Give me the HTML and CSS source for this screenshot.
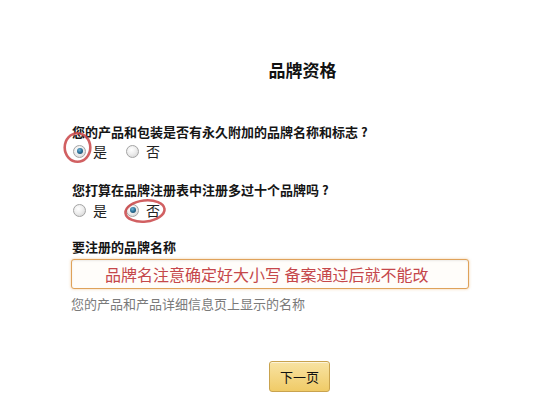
FILE: index.html
```html
<!DOCTYPE html>
<html lang="zh-CN">
<head>
<meta charset="utf-8">
<title>品牌资格</title>
<link rel="stylesheet" href="styles.css">
</head>
<body>
<main class="page">
  <h1 class="title">品牌资格</h1>

  <section class="question q1">
    <p class="q-text">您的产品和包装是否有永久附加的品牌名称和标志 ?</p>
    <div class="options">
      <label class="option"><span class="radio checked"></span><span class="opt-label">是</span>
        <svg class="ring ring1" viewBox="0 0 29 31" width="29" height="31"><ellipse cx="14.5" cy="15.5" rx="12.8" ry="14.2" fill="none" stroke="#c94446" stroke-width="2.6" opacity="0.85"/></svg>
      </label>
      <label class="option"><span class="radio"></span><span class="opt-label">否</span></label>
    </div>
  </section>

  <section class="question q2">
    <p class="q-text">您打算在品牌注册表中注册多过十个品牌吗 ?</p>
    <div class="options">
      <label class="option"><span class="radio"></span><span class="opt-label">是</span></label>
      <label class="option"><span class="radio checked"></span><span class="opt-label">否</span>
        <svg class="ring ring2" viewBox="0 0 44 26" width="44" height="26"><ellipse cx="22" cy="13" rx="19.6" ry="10.6" transform="rotate(-6 22 13)" fill="none" stroke="#c94446" stroke-width="2.6" opacity="0.85"/></svg>
      </label>
    </div>
  </section>

  <section class="field">
    <p class="field-label">要注册的品牌名称</p>
    <input class="brand-input" type="text" readonly value="品牌名注意确定好大小写 备案通过后就不能改">
    <p class="hint">您的产品和产品详细信息页上显示的名称</p>
  </section>

  <div class="actions">
    <button class="next-btn" type="button">下一页</button>
  </div>
</main>
</body>
</html>
```

FILE: styles.css
```css
html, body {
  margin: 0;
  padding: 0;
  background: #ffffff;
}

body {
  font-family: "Noto Sans CJK SC", "Noto Sans", "Liberation Sans", sans-serif;
  color: #1a1a1a;
  width: 533px;
  height: 400px;
  overflow: hidden;
}

.page {
  display: flex;
  flex-direction: column;
  padding: 58px 0 0 72px;
  width: 461px;
}

.title {
  margin: 0;
  font-size: 17px;
  line-height: 24px;
  font-weight: 700;
  text-align: center;
  color: #111;
}

.question {
  display: flex;
  flex-direction: column;
  gap: 1px;
}

.q1 { margin-top: 41px; }
.q2 { margin-top: 21px; }
.q2 .options { margin-top: 1px; }

.q-text,
.field-label {
  margin: 0;
  font-size: 13px;
  line-height: 18px;
  font-weight: 700;
  color: #151515;
}

.options {
  display: flex;
  align-items: center;
  height: 18px;
  gap: 19px;
}

.option {
  position: relative;
  display: flex;
  align-items: center;
  gap: 7px;
  font-size: 14px;
  line-height: 18px;
  color: #222;
}

.option:first-child { margin-left: 1px; }

.radio {
  position: relative;
  width: 11px;
  height: 11px;
  border: 1px solid #a4a4a4;
  border-radius: 50%;
  background: radial-gradient(circle at 40% 35%, #ffffff 0%, #eeeeee 45%, #cfcfcf 100%);
  box-sizing: content-box;
}

.radio.checked::after {
  content: "";
  position: absolute;
  left: 2.5px;
  top: 2.5px;
  width: 6px;
  height: 6px;
  border-radius: 50%;
  background: radial-gradient(circle at 40% 35%, #6fb4d8 0%, #2a6f96 50%, #173f57 100%);
}

.ring {
  position: absolute;
  pointer-events: none;
}

.ring1 {
  left: -10px;
  top: -10px;
}

.ring2 {
  left: -3px;
  top: -3px;
}

.field {
  display: flex;
  flex-direction: column;
  margin-top: 19px;
}

.brand-input {
  margin-top: 3px;
  width: 398px;
  height: 30px;
  box-sizing: border-box;
  margin-left: -1px;
  padding: 0 0 0 33px;
  border: 1px solid #dfa25a;
  border-radius: 3px;
  background: #fffdfa;
  box-shadow: 0 0 3px rgba(226, 160, 80, 0.55), inset 0 1px 2px rgba(0, 0, 0, 0.08);
  font-family: "Noto Sans CJK SC", "Noto Sans", sans-serif;
  font-size: 16px;
  color: #c5474a;
  outline: none;
}

.hint {
  margin: 6px 0 0 -1px;
  font-size: 13px;
  line-height: 18px;
  color: #7a7a7a;
}

.actions {
  display: flex;
  justify-content: center;
  margin-top: 48px;
  padding-right: 6px;
}

.next-btn {
  width: 61px;
  height: 31px;
  border: 1px solid #c9a34e;
  border-radius: 3px;
  background: linear-gradient(#f8e3a3, #f0cb67);
  box-shadow: inset 0 1px 0 rgba(255, 255, 255, 0.6);
  font-family: "Noto Sans CJK SC", "Noto Sans", sans-serif;
  font-size: 13px;
  color: #111;
  padding: 0;
}
```
